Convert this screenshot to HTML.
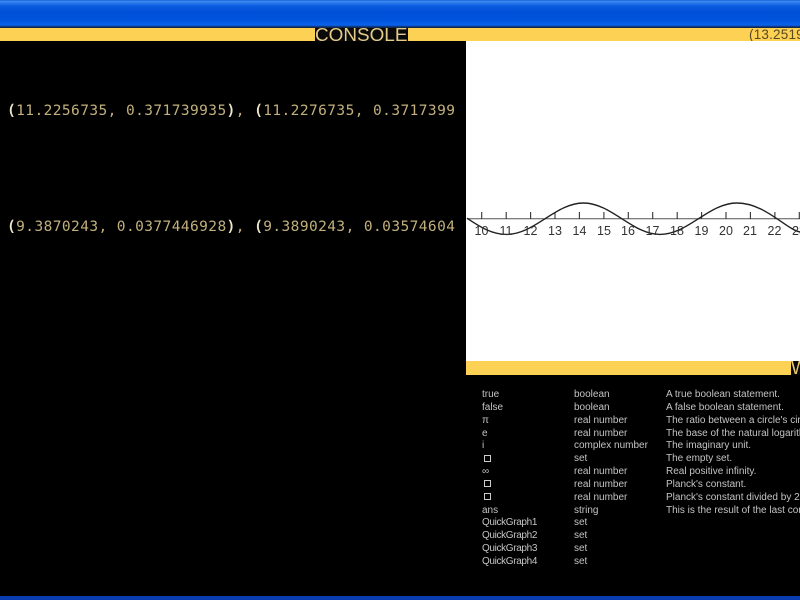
<!DOCTYPE html>
<html><head><meta charset="utf-8"><style>
html,body{margin:0;padding:0;background:#000;width:800px;height:600px;overflow:hidden}
div{position:absolute}
.a{font:14.5px/16px "DejaVu Sans Mono","Liberation Mono",monospace;color:#c2b07c;letter-spacing:.42px;white-space:pre;left:7px;filter:blur(.3px)}
.a b{color:#efe6c8;font-weight:normal;-webkit-text-stroke:.5px #efe6c8}
.t{font:10px/12.85px "Liberation Sans",sans-serif;color:#c4c4c4;white-space:pre;filter:blur(.25px)}
.t u{text-decoration:none;letter-spacing:-.35px}
.n{font:12.5px/14px "Liberation Sans",sans-serif;color:#333;top:224px;width:16px;text-align:center;white-space:pre;filter:blur(.25px)}
.h{font:18px/14px "Liberation Sans",sans-serif;white-space:pre}
i{display:inline-block;width:5px;height:5px;border:1.4px solid #ccc;margin-left:2px;vertical-align:-.5px}
</style></head><body>
<div style="left:0;top:0;width:800px;height:28px;background:linear-gradient(#0a4fd0 0,#3f8cf3 1px,#2a78ea 3px,#0a5be0 6px,#0050d8 12px,#0053dc 20px,#0a62ea 25px,#0a4cb8 26px,#10284f 27px)"></div>
<div style="left:0;top:28px;width:800px;height:13px;background:#fdd154"></div>
<div class="h" style="left:315px;top:28px;width:93px;height:13px;background:#0a0a0a;color:#e2cc88;overflow:hidden"><span style="display:inline-block;transform:scaleX(1.05);transform-origin:0 0">CONSOLE</span></div>
<div style="left:749px;top:28px;font:13.5px/14px 'Liberation Sans',sans-serif;color:#5a4a20;white-space:pre;letter-spacing:.2px">(13.2519</div>
<div class="a" style="top:103px"><b>(</b>11.2256735, 0.371739935<b>)</b>, <b>(</b>11.2276735, 0.3717399</div>
<div class="a" style="top:219px"><b>(</b>9.3870243, 0.0377446928<b>)</b>, <b>(</b>9.3890243, 0.03574604</div>
<div style="left:466px;top:41px;width:334px;height:320px;background:#fff"></div>
<svg style="position:absolute;left:0;top:0" width="800" height="600">
<path d="M467 218.7H800" stroke="#555" stroke-width="1" fill="none"/>
<path d="M481.7 212v7M506.2 212v7M530.6 212v7M555 212v7M579.4 212v7M603.9 212v7M628.3 212v7M652.7 212v7M677.2 212v7M701.6 212v7M726 212v7M750.4 212v7M774.9 212v7M799.3 212v7" stroke="#333" stroke-width="1.1" fill="none"/>
<path d="M467 218.2C480 227 492 234.4 506.6 234.4C534.5 234.4 555.7 203 583.4 203C611.3 203 632.2 234.4 660.1 234.4C688 234.4 709 203 736.9 203C764.8 203 785.7 229 800 232" stroke="#222" stroke-width="1.4" fill="none"/>
</svg>
<div class="n" style="left:473.5px">10</div>
<div class="n" style="left:498px">11</div>
<div class="n" style="left:522.5px">12</div>
<div class="n" style="left:547px">13</div>
<div class="n" style="left:571.5px">14</div>
<div class="n" style="left:596px">15</div>
<div class="n" style="left:620px">16</div>
<div class="n" style="left:644.5px">17</div>
<div class="n" style="left:669px">18</div>
<div class="n" style="left:693.5px">19</div>
<div class="n" style="left:718px">20</div>
<div class="n" style="left:742px">21</div>
<div class="n" style="left:766.5px">22</div>
<div class="n" style="left:791px">23</div>
<div style="left:466px;top:361px;width:325px;height:14px;background:#fdd154"></div>
<div class="h" style="left:791px;top:361px;width:9px;height:14px;background:#0a0a0a;color:#e8c870;overflow:hidden">W</div>
<div class="t" style="left:482px;top:389px">true
false
π
e
i
<i></i>
∞
<i></i>
<i></i>
ans
<u>QuickGraph1</u>
<u>QuickGraph2</u>
<u>QuickGraph3</u>
<u>QuickGraph4</u></div>
<div class="t" style="left:574px;top:389px">boolean
boolean
real number
real number
complex number
set
real number
real number
real number
string
set
set
set
set</div>
<div class="t" style="left:666px;top:389px;width:134px;overflow:hidden">A true boolean statement.
A false boolean statement.
The ratio between a circle's circumference
The base of the natural logarithm.
The imaginary unit.
The empty set.
Real positive infinity.
Planck's constant.
Planck's constant divided by 2π.
This is the result of the last command.</div>
<div style="left:0;top:596px;width:800px;height:4px;background:#0a3cb0"></div>
</body></html>
